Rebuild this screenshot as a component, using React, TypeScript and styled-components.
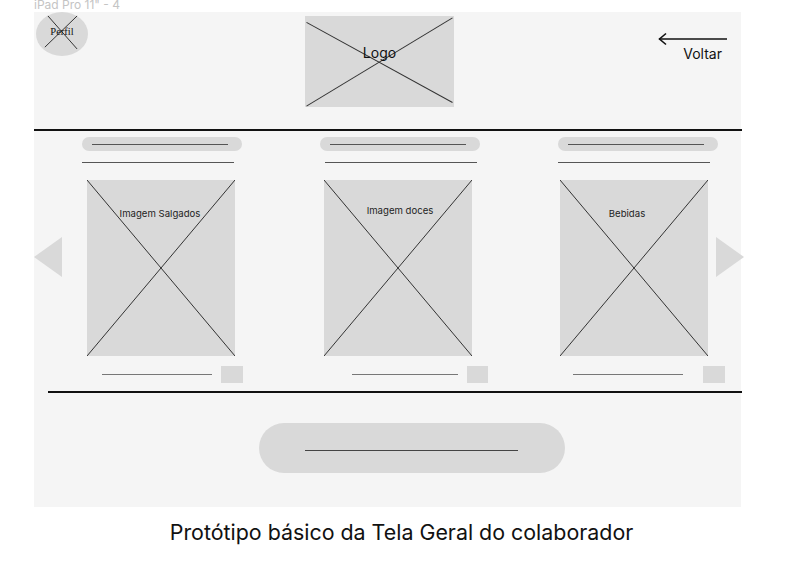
import React from "react";
import styled, { createGlobalStyle } from "styled-components";

const Global = createGlobalStyle`
  html, body { margin: 0; padding: 0; background: #ffffff; }
  body { font-family: Inter, "Noto Sans", sans-serif; color: #1e1e1e; }
`;

const Page = styled.div`
  width: 788px;
  height: 576px;
  overflow: hidden;
`;

const FrameLabel = styled.div`
  margin: -1px 0 0 34px;
  height: 13px;
  font-size: 12px;
  line-height: 12px;
  color: #c4c4c4;
  white-space: nowrap;
`;

const Frame = styled.div`
  margin-left: 34px;
  width: 707px;
  height: 495px;
  background: #f5f5f5;
  display: flex;
  flex-direction: column;
`;

const Header = styled.header`
  height: 117px;
  display: flex;
  align-items: flex-start;
  padding-left: 2px;
`;

const Placeholder = styled.div`
  position: relative;
  background: #d9d9d9;
`;

const Profile = styled(Placeholder)`
  width: 52px;
  height: 44px;
  border-radius: 50%;
  display: flex;
  justify-content: center;
  padding-top: 14px;
  box-sizing: border-box;
  font-family: "Liberation Serif", "DejaVu Serif", serif;
  font-size: 10.5px;
  line-height: 12px;
  color: #111;
`;

const Logo = styled(Placeholder)`
  margin: 4px 0 0 217px;
  width: 149px;
  height: 91px;
  display: flex;
  justify-content: center;
  padding-top: 28px;
  box-sizing: border-box;
  font-size: 14px;
  line-height: 18px;
  color: #111;
`;

const Label = styled.span`
  position: relative;
  z-index: 1;
`;

const Back = styled.div`
  margin: 20px 13px 0 auto;
  display: flex;
  flex-direction: column;
  align-items: flex-end;
`;

const BackText = styled.span`
  margin-right: 6px;
  font-size: 14px;
  line-height: 16px;
  color: #111;
`;

const Divider = styled.div<{ $inset?: number }>`
  height: 2px;
  margin-left: ${(p) => p.$inset ?? 0}px;
  width: calc(100% + 1px - ${(p) => p.$inset ?? 0}px);
  background: #111;
`;

const Carousel = styled.section`
  position: relative;
  height: 260px;
  box-sizing: border-box;
  padding: 6px 0 0 48px;
  display: flex;
  gap: 70px;
`;

const NavArrow = styled.svg<{ $left: number }>`
  position: absolute;
  top: 106px;
  left: ${(p) => p.$left}px;
  width: 28px;
  height: 40px;
`;

const Column = styled.div`
  width: 168px;
  display: flex;
  flex-direction: column;
`;

const TitlePill = styled.div`
  width: 160px;
  height: 14px;
  border-radius: 7px;
  background: #d9d9d9;
  display: flex;
  align-items: center;
  padding: 0 14px 0 10px;
  box-sizing: border-box;
`;

const Rule = styled.div<{ $color?: string }>`
  height: 1px;
  flex: 1;
  background: ${(p) => p.$color ?? "#555"};
`;

const Underline = styled.div<{ $x: number }>`
  margin: 11px 0 0 ${(p) => p.$x}px;
  width: 152px;
  height: 1px;
  background: #555;
`;

const ImageBox = styled(Placeholder)<{ $x: number; $top: number; $shift: number }>`
  margin: 17px 0 0 ${(p) => p.$x}px;
  width: 148px;
  height: 176px;
  display: flex;
  justify-content: center;
  box-sizing: border-box;
  padding-top: ${(p) => p.$top}px;
  padding-left: ${(p) => (p.$shift > 0 ? p.$shift * 2 : 0)}px;
  padding-right: ${(p) => (p.$shift < 0 ? -p.$shift * 2 : 0)}px;
  font-size: 9.6px;
  line-height: 12px;
  color: #1e1e1e;
`;

const Footer = styled.div<{ $x: number; $gap: number }>`
  margin: 10px 0 0 ${(p) => p.$x}px;
  height: 17px;
  display: flex;
  align-items: center;
  gap: ${(p) => p.$gap}px;
`;

const PriceLine = styled.div`
  width: 110px;
  height: 1px;
  background: #777;
`;

const Square = styled.div`
  width: 22px;
  height: 17px;
  background: #d9d9d9;
`;

const Bottom = styled.section`
  flex: 1;
  padding: 30px 0 0 225px;
`;

const ActionPill = styled.div`
  width: 306px;
  height: 50px;
  border-radius: 25px;
  background: #d9d9d9;
  display: flex;
  align-items: flex-start;
  padding: 27px 0 0 46px;
  box-sizing: border-box;
`;

const ActionLine = styled.div`
  width: 213px;
  height: 1px;
  background: #444;
`;

const Caption = styled.p`
  margin: 13px 0 0;
  padding-left: 15px;
  text-align: center;
  font-size: 21.4px;
  line-height: 24px;
  color: #111;
`;

const CrossSvg = styled.svg`
  position: absolute;
  inset: 0;
  width: 100%;
  height: 100%;
`;

const Cross = ({ a = [0, 0, 100, 100], b = [100, 0, 0, 100] }: { a?: number[]; b?: number[] }) => (
  <CrossSvg viewBox="0 0 100 100" preserveAspectRatio="none">
    <line x1={a[0]} y1={a[1]} x2={a[2]} y2={a[3]} stroke="#333" strokeWidth={1} vectorEffect="non-scaling-stroke" />
    <line x1={b[0]} y1={b[1]} x2={b[2]} y2={b[3]} stroke="#333" strokeWidth={1} vectorEffect="non-scaling-stroke" />
  </CrossSvg>
);

const columns = [
  { label: "Imagem Salgados", top: 28, shift: -1, under: 0, box: 5, line: 20, gap: 9 },
  { label: "Imagem doces", top: 25, shift: 2, under: 5, box: 4, line: 32, gap: 9 },
  { label: "Bebidas", top: 28, shift: -7, under: 0, box: 2, line: 15, gap: 20 },
];

export default function App() {
  return (
    <Page>
      <Global />
      <FrameLabel>iPad Pro 11" - 4</FrameLabel>
      <Frame>
        <Header>
          <Profile>
            <Cross a={[23, 9, 79, 84]} b={[79, 9, 17, 80]} />
            <Label>Perfil</Label>
          </Profile>
          <Logo>
            <Cross a={[1, 7, 99, 95]} b={[1, 99, 99, 2]} />
            <Label>Logo</Label>
          </Logo>
          <Back>
            <svg width="70" height="14" viewBox="0 0 70 14">
              <line x1="1" y1="7" x2="69" y2="7" stroke="#111" strokeWidth="1.6" />
              <polyline points="8,1.5 1.5,7 8,12.5" fill="none" stroke="#111" strokeWidth="1.6" />
            </svg>
            <BackText>Voltar</BackText>
          </Back>
        </Header>
        <Divider />
        <Carousel>
          <NavArrow $left={0} viewBox="0 0 28 40">
            <polygon points="28,0 28,40 0,20" fill="#d9d9d9" />
          </NavArrow>
          {columns.map((c) => (
            <Column key={c.label}>
              <TitlePill>
                <Rule />
              </TitlePill>
              <Underline $x={c.under} />
              <ImageBox $x={c.box} $top={c.top} $shift={c.shift}>
                <Cross />
                <Label>{c.label}</Label>
              </ImageBox>
              <Footer $x={c.line} $gap={c.gap}>
                <PriceLine />
                <Square />
              </Footer>
            </Column>
          ))}
          <NavArrow $left={682} viewBox="0 0 28 40">
            <polygon points="0,0 0,40 28,20" fill="#d9d9d9" />
          </NavArrow>
        </Carousel>
        <Divider $inset={14} />
        <Bottom>
          <ActionPill>
            <ActionLine />
          </ActionPill>
        </Bottom>
      </Frame>
      <Caption>Protótipo básico da Tela Geral do colaborador</Caption>
    </Page>
  );
}
